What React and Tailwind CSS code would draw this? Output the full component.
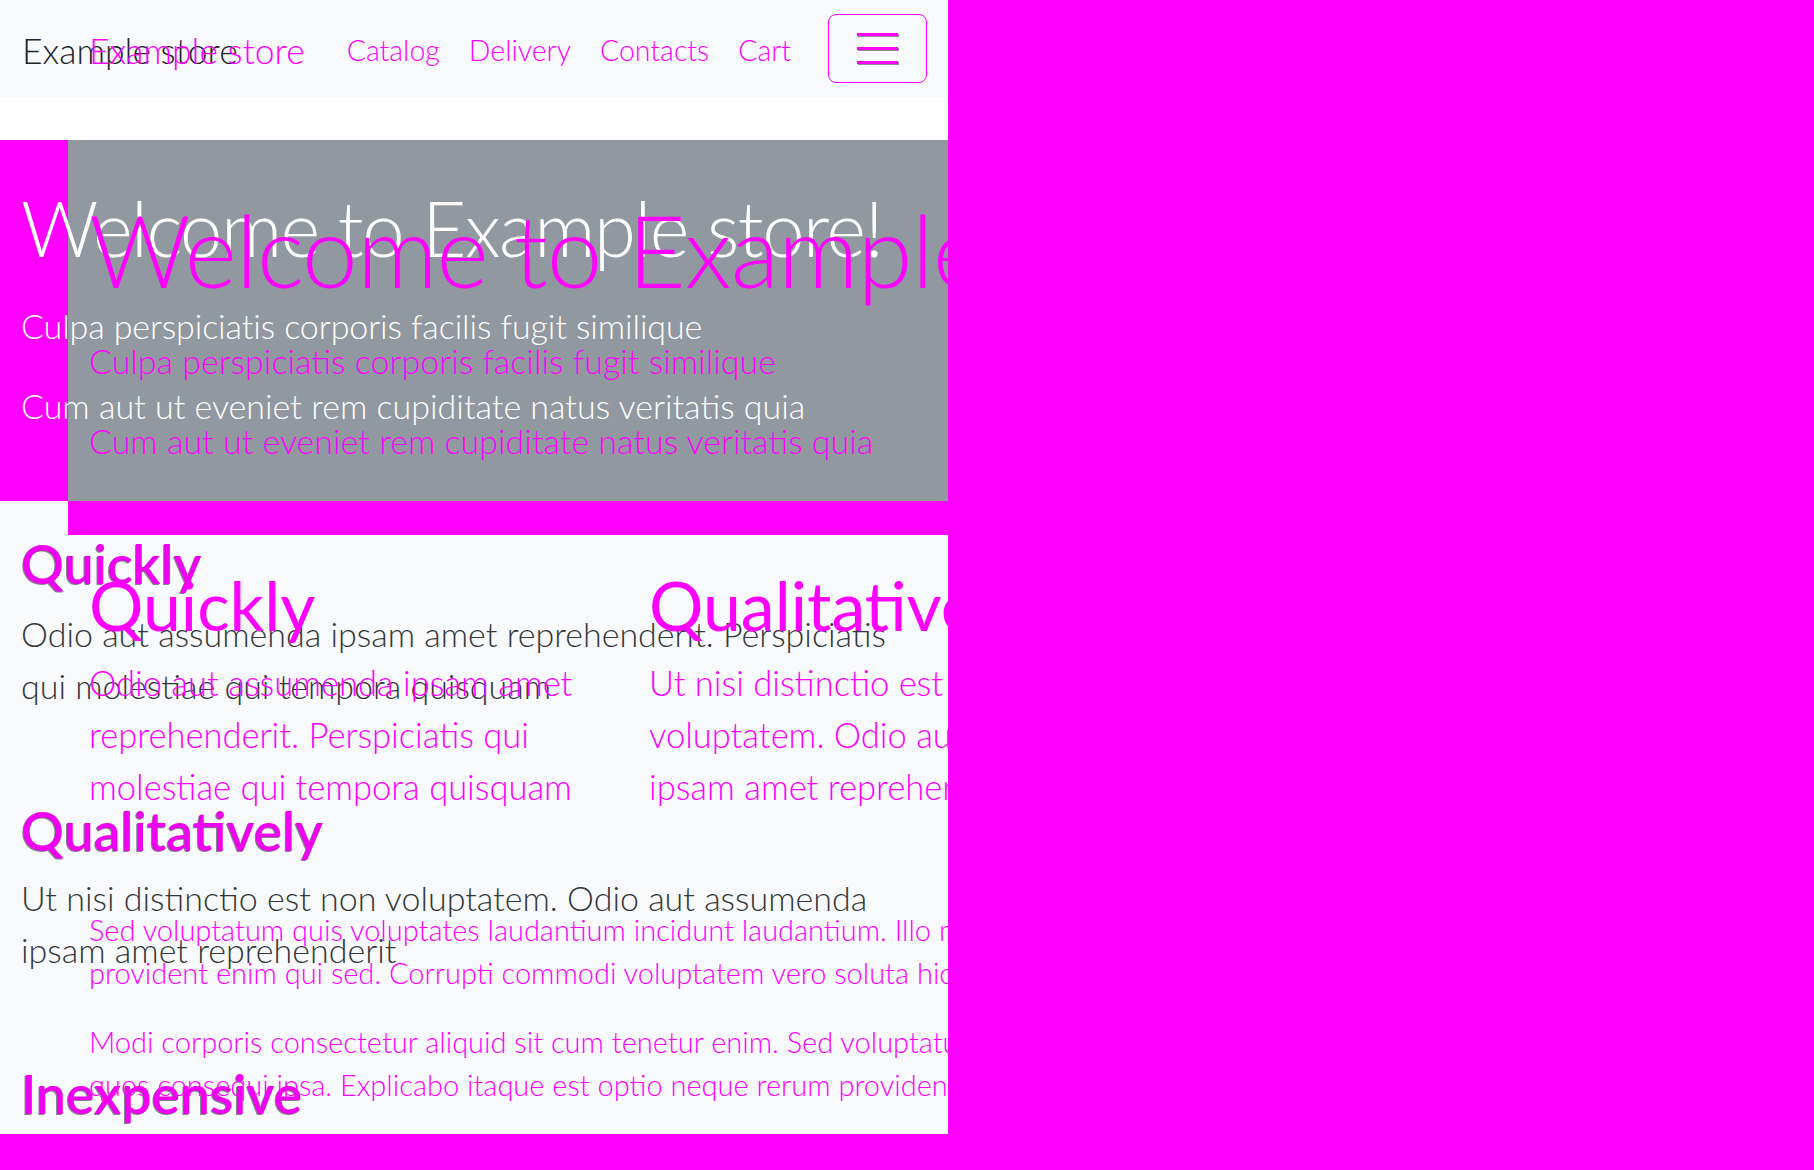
import React from "react";

const M = "text-[#ff00ff]";

function Hamburger() {
  return (
    <button className="w-[99px] h-[69px] rounded-[8px] border border-[#ff00ff] flex flex-col items-center justify-center gap-[11px]">
      <span className="block w-[41px] h-[3px] bg-[#ff00ff] shadow-[1px_1px_0_#8a8f94]" />
      <span className="block w-[41px] h-[3px] bg-[#ff00ff] shadow-[1px_1px_0_#8a8f94]" />
      <span className="block w-[41px] h-[3px] bg-[#ff00ff] shadow-[1px_1px_0_#8a8f94]" />
    </button>
  );
}

function BaseLayer() {
  const heading =
    "text-[53.5px] leading-[52px] font-semibold text-[#f000f0] [text-shadow:-1px_1px_0_rgba(33,37,41,0.55)] whitespace-nowrap";
  const para = "text-[34px] leading-[52px] font-light text-[#33373b] whitespace-nowrap";
  return (
    <div className="flex flex-col">
      <nav className="h-[97px] flex items-center justify-between pl-[22px] pr-[21px]">
        <span className="text-[35.5px] leading-none font-light text-[#212529] pt-[4px]">Example store</span>
        <Hamburger />
      </nav>
      <div className="h-[43px] bg-white" />
      <section className="h-[361px] bg-[linear-gradient(to_right,#ff00ff_68px,#92989f_68px)] pl-[21px] pt-[50px] text-white font-light">
        <h1 className="text-[76px] leading-[76px] tracking-[-1.5px] whitespace-nowrap">Welcome to Example store!</h1>
        <p className="mt-[43px] text-[34px] leading-[34px] tracking-[-0.1px] whitespace-nowrap">Culpa perspiciatis corporis facilis fugit similique</p>
        <p className="mt-[46px] text-[34px] leading-[34px] whitespace-nowrap">Cum aut ut eveniet rem cupiditate natus veritatis quia</p>
      </section>
      <div className="h-[34px] bg-[linear-gradient(to_right,#f8f9fa_68px,#ff00ff_68px)]" />
      <main className="pl-[21px] pt-[2px]">
        <h2 className={heading}>Quickly</h2>
        <p className={para + " mt-[19px]"}>
          Odio aut assumenda ipsam amet reprehenderit. Perspiciatis
          <br />
          qui molestiae qui tempora quisquam
        </p>
        <h2 className={heading + " mt-[92px]"}>Qualitatively</h2>
        <p className={para + " mt-[16px]"}>
          Ut nisi distinctio est non voluptatem. Odio aut assumenda
          <br />
          ipsam amet reprehenderit
        </p>
        <h2 className={heading + " mt-[91px]"}>Inexpensive</h2>
      </main>
    </div>
  );
}

function GhostLayer() {
  const col = "text-[34.5px] leading-[52px] font-light whitespace-nowrap mt-[18px]";
  const head = "text-[68px] leading-[68px] font-normal whitespace-nowrap";
  const small = "text-[29px] leading-[43px] font-light whitespace-nowrap";
  return (
    <div className={"absolute inset-0 pointer-events-none flex flex-col pl-[89px] " + M}>
      <div className="h-[97px] flex items-center pt-[4px] font-light">
        <span className="text-[35.5px] leading-none">Example store</span>
        <div className="flex items-center gap-[29px] ml-[42px] text-[28.5px] leading-none">
          <span>Catalog</span>
          <span>Delivery</span>
          <span>Contacts</span>
          <span>Cart</span>
        </div>
      </div>
      <h1 className="mt-[102px] text-[100px] leading-[100px] tracking-[-1px] font-light whitespace-nowrap">Welcome to Example store!</h1>
      <p className="mt-[45px] text-[34px] leading-[34px] font-light whitespace-nowrap">Culpa perspiciatis corporis facilis fugit similique</p>
      <p className="mt-[46px] text-[34px] leading-[34px] font-light whitespace-nowrap">Cum aut ut eveniet rem cupiditate natus veritatis quia</p>
      <div className="mt-[113px] grid grid-cols-[560px_560px]">
        <div>
          <h2 className={head}>Quickly</h2>
          <p className={col}>
            Odio aut assumenda ipsam amet
            <br />
            reprehenderit. Perspiciatis qui
            <br />
            molestiae qui tempora quisquam
          </p>
        </div>
        <div>
          <h2 className={head}>Qualitatively</h2>
          <p className={col}>
            Ut nisi distinctio est non
            <br />
            voluptatem. Odio aut assumenda
            <br />
            ipsam amet reprehenderit
          </p>
        </div>
      </div>
      <p className={small + " mt-[95px]"}>
        Sed voluptatum quis voluptates laudantium incidunt laudantium. Illo maiores
        <br />
        provident enim qui sed. Corrupti commodi voluptatem vero soluta hic
      </p>
      <p className={small + " mt-[26px]"}>
        Modi corporis consectetur aliquid sit cum tenetur enim. Sed voluptatum
        <br />
        quos consequi ipsa. Explicabo itaque est optio neque rerum provident eum
      </p>
    </div>
  );
}

export default function App() {
  return (
    <div className="min-h-screen w-full bg-[#ff00ff] [font-family:Lato,'Open_Sans',sans-serif]">
      <div className="relative w-[948px] h-[1134px] overflow-hidden bg-[#f8f9fa]">
        <BaseLayer />
        <GhostLayer />
      </div>
    </div>
  );
}
